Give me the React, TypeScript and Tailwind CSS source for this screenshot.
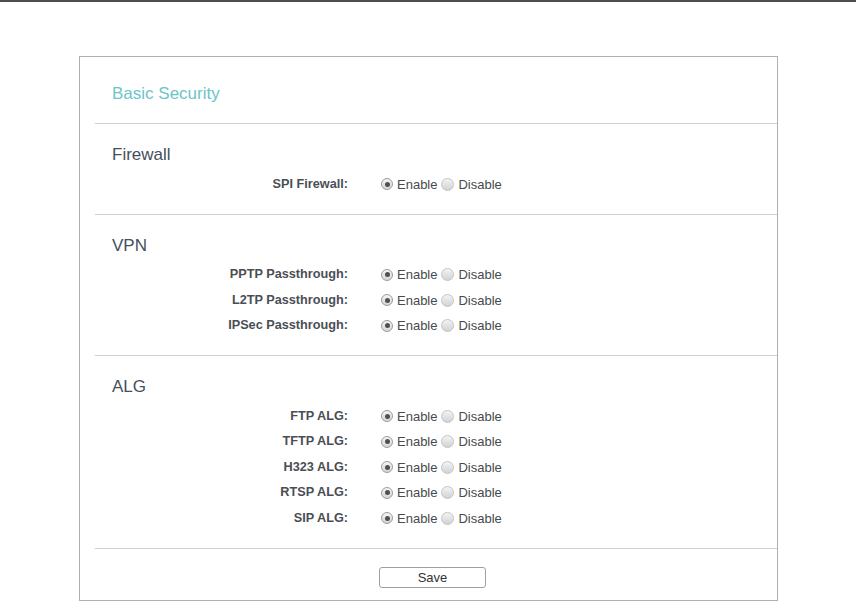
import React from "react";

function Radio({ checked }: { checked: boolean }) {
  if (checked) {
    return (
      <span className="flex h-[12px] w-[12px] shrink-0 items-center justify-center rounded-full border border-[#9c9c9c] bg-gradient-to-b from-[#f4f4f4] to-[#d6d6d6]">
        <span className="h-[5px] w-[5px] rounded-full bg-[#505050]" />
      </span>
    );
  }
  return (
    <span className="block h-[13px] w-[13px] shrink-0 rounded-full border border-[#c4c4c4] bg-gradient-to-b from-[#f4f4f4] to-[#d2d2d2]" />
  );
}

function Row({ label }: { label: string }) {
  return (
    <div className="flex h-[25.5px] items-center">
      <div className="w-[268px] text-right text-[12.7px] font-bold text-[#4a4e54]">{label}</div>
      <div className="ml-[33px] flex items-center text-[13px] text-[#4a4a4a]">
        <Radio checked />
        <span className="ml-[4px]">Enable</span>
        <span className="ml-[3.5px] flex items-center">
          <Radio checked={false} />
        </span>
        <span className="ml-[4.5px]">Disable</span>
      </div>
    </div>
  );
}

function Divider() {
  return <div className="ml-[15px] border-t border-[#d4d0cc]" />;
}

function Section({ title, rows }: { title: string; rows: string[] }) {
  return (
    <div className="pb-[16.5px] pt-[19px]">
      <div className="pl-[32px] text-[17px] leading-[24px] text-[#44505c]">{title}</div>
      <div className="mt-[4.5px]">
        {rows.map((r) => (
          <Row key={r} label={r} />
        ))}
      </div>
    </div>
  );
}

export default function App() {
  return (
    <div
      className="h-[601px] w-[856px] overflow-hidden bg-white"
      style={{ fontFamily: '"Liberation Sans", Arial, sans-serif' }}
    >
      <div className="h-[2px] bg-[#4d4d4d]" />
      <div className="ml-[79px] mt-[54px] h-[545px] w-[699px] border border-[#b0b0b0] bg-white">
        <div className="pb-[17px] pl-[32px] pt-[25px] text-[17px] leading-[24px] text-[#6cc4c8]">
          Basic Security
        </div>
        <Divider />
        <Section title="Firewall" rows={["SPI Firewall:"]} />
        <Divider />
        <Section title="VPN" rows={["PPTP Passthrough:", "L2TP Passthrough:", "IPSec Passthrough:"]} />
        <Divider />
        <Section title="ALG" rows={["FTP ALG:", "TFTP ALG:", "H323 ALG:", "RTSP ALG:", "SIP ALG:"]} />
        <Divider />
        <div className="pl-[299px] pt-[18.5px]">
          <button className="flex h-[21px] w-[107px] items-center justify-center rounded-[3px] border border-[#a0a0a0] bg-white text-[13px] text-[#333]">
            Save
          </button>
        </div>
      </div>
    </div>
  );
}
